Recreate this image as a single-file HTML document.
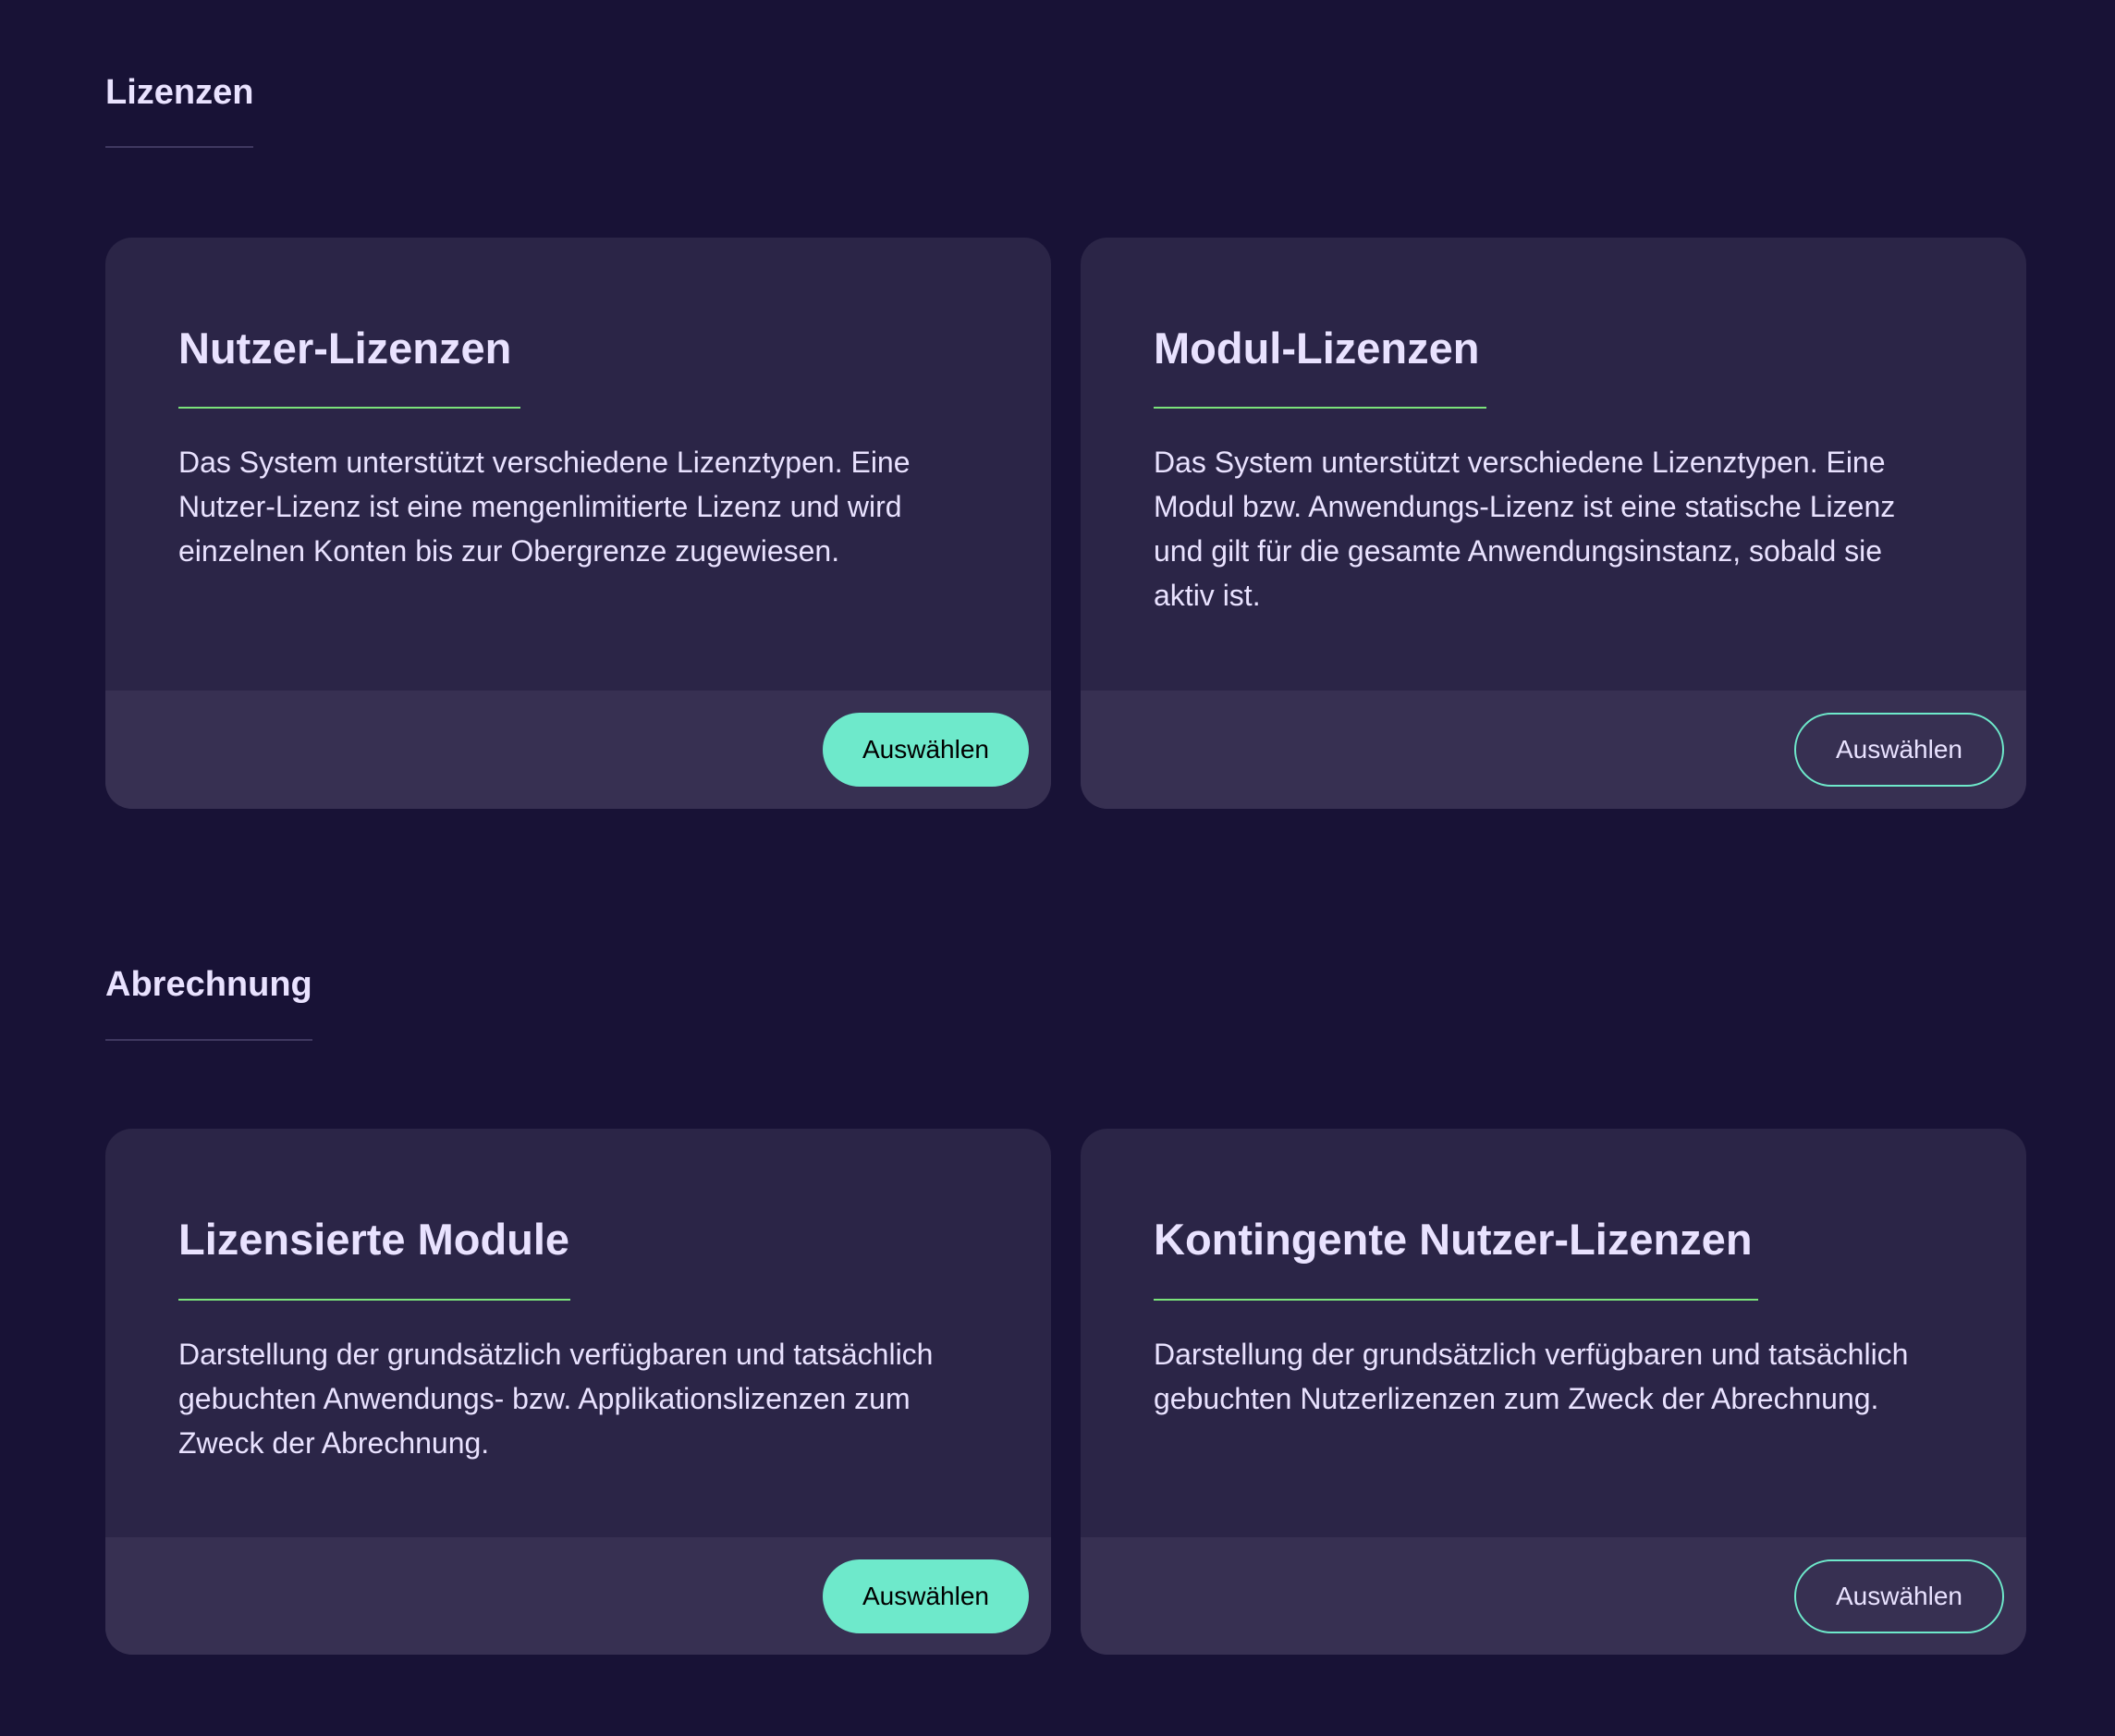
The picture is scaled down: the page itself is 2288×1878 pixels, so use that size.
<!DOCTYPE html>
<html><head><meta charset="utf-8"><style>
*{margin:0;padding:0;box-sizing:border-box}
html,body{width:2288px;height:1878px;background:#181236;overflow:hidden;font-family:"Liberation Sans",sans-serif;color:#e9e2ff}
.h{position:absolute;left:114px;font-size:38px;font-weight:bold;color:#e9e2ff}
.hl{position:absolute;left:114px;height:2px;background:#3f3860}
.card{position:absolute;width:1023px;background:#2b2547;border-radius:29px;overflow:hidden}
.card .t{position:absolute;left:79px;font-size:47px;font-weight:bold;color:#e9e2ff;white-space:nowrap}
.card .u{position:absolute;left:79px;height:2px;background:#7be37a}
.card .b{position:absolute;left:79px;font-size:32px;line-height:48px;color:#e9e2ff;white-space:nowrap}
.card .f{position:absolute;left:0;right:0;bottom:0;background:#373052}
.btn{position:absolute;right:24px;width:223px;height:80px;border-radius:40px;font-size:28px;display:flex;align-items:center;justify-content:center}
.btn.p{background:#6ee9cb;color:#000}
.btn.o{border:2px solid #6ee9cb;color:#e9e2ff}
</style></head><body>
<div class="h" style="top:79px">Lizenzen</div>
<div class="hl" style="top:158px;width:160px"></div>

<div class="card" style="left:114px;top:257px;height:618px">
 <div class="t" style="top:92px">Nutzer-Lizenzen</div>
 <div class="u" style="top:183px;width:370px"></div>
 <div class="b" style="top:219px">Das System unterstützt verschiedene Lizenztypen. Eine<br>Nutzer-Lizenz ist eine mengenlimitierte Lizenz und wird<br>einzelnen Konten bis zur Obergrenze zugewiesen.</div>
 <div class="f" style="height:128px"><div class="btn p" style="top:24px">Auswählen</div></div>
</div>
<div class="card" style="left:1169px;top:257px;height:618px">
 <div class="t" style="top:92px">Modul-Lizenzen</div>
 <div class="u" style="top:183px;width:360px"></div>
 <div class="b" style="top:219px">Das System unterstützt verschiedene Lizenztypen. Eine<br>Modul bzw. Anwendungs-Lizenz ist eine statische Lizenz<br>und gilt für die gesamte Anwendungsinstanz, sobald sie<br>aktiv ist.</div>
 <div class="f" style="height:128px"><div class="btn o" style="top:24px;width:227px">Auswählen</div></div>
</div>

<div class="h" style="top:1044px">Abrechnung</div>
<div class="hl" style="top:1124px;width:224px"></div>

<div class="card" style="left:114px;top:1221px;height:569px">
 <div class="t" style="top:92px">Lizensierte Module</div>
 <div class="u" style="top:184px;width:424px"></div>
 <div class="b" style="top:220px">Darstellung der grundsätzlich verfügbaren und tatsächlich<br>gebuchten Anwendungs- bzw. Applikationslizenzen zum<br>Zweck der Abrechnung.</div>
 <div class="f" style="height:127px"><div class="btn p" style="top:24px">Auswählen</div></div>
</div>
<div class="card" style="left:1169px;top:1221px;height:569px">
 <div class="t" style="top:92px">Kontingente Nutzer-Lizenzen</div>
 <div class="u" style="top:184px;width:654px"></div>
 <div class="b" style="top:220px">Darstellung der grundsätzlich verfügbaren und tatsächlich<br>gebuchten Nutzerlizenzen zum Zweck der Abrechnung.</div>
 <div class="f" style="height:127px"><div class="btn o" style="top:24px;width:227px">Auswählen</div></div>
</div>
</body></html>
